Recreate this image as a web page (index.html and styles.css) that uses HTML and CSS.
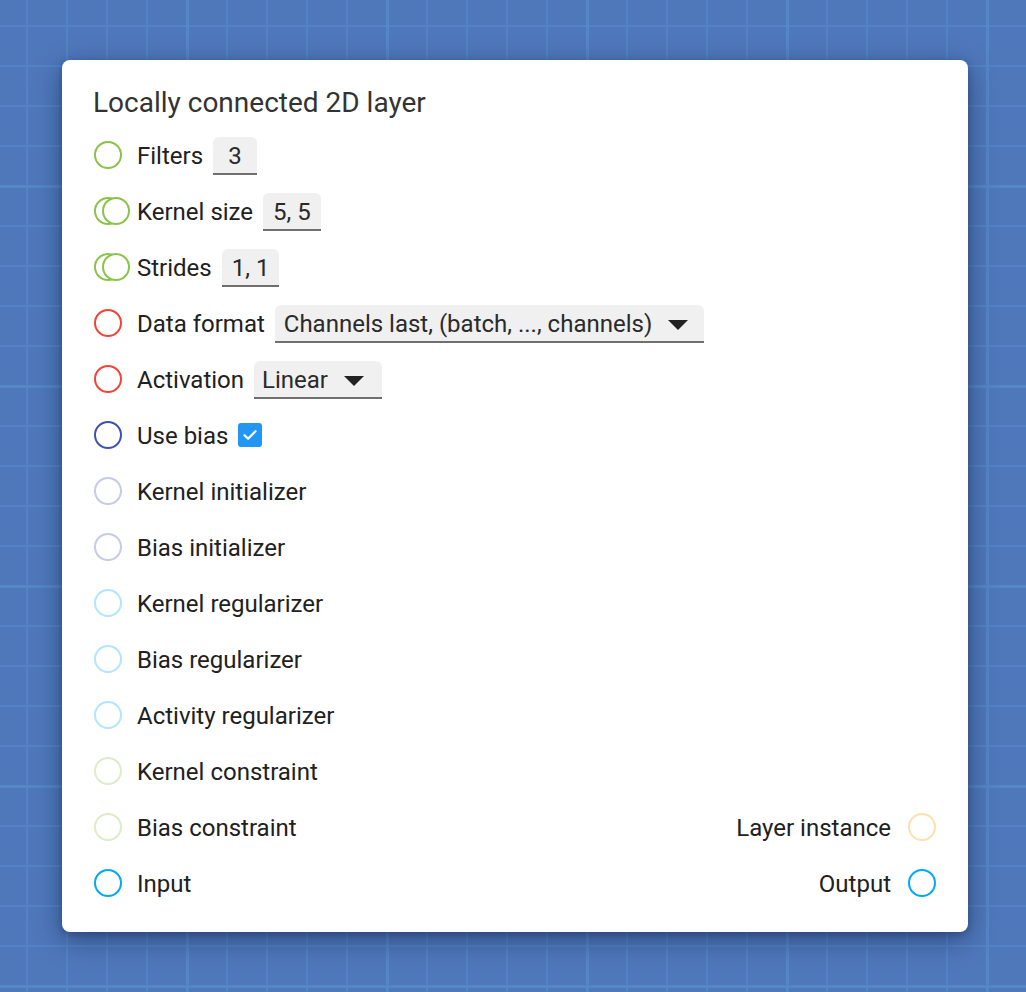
FILE: index.html
```html
<!DOCTYPE html>
<html>
<head>
<meta charset="utf-8">
<link rel="stylesheet" href="styles.css">
</head>
<body>
<div class="canvas">
  <div class="card">
    <div class="title">Locally connected 2D layer</div>
    <div class="rows">
      <div class="row">
        <div class="side">
          <svg class="sock" viewBox="0 0 36 28"><circle cx="14" cy="14" r="13" class="s-green"/></svg>
          <span class="label">Filters</span>
          <span class="field num">3</span>
        </div>
      </div>
      <div class="row">
        <div class="side">
          <svg class="sock" viewBox="0 0 36 28"><circle cx="14" cy="14" r="13" class="s-green"/><circle cx="22" cy="14" r="13" class="s-green"/></svg>
          <span class="label">Kernel size</span>
          <span class="field num">5, 5</span>
        </div>
      </div>
      <div class="row">
        <div class="side">
          <svg class="sock" viewBox="0 0 36 28"><circle cx="14" cy="14" r="13" class="s-green"/><circle cx="22" cy="14" r="13" class="s-green"/></svg>
          <span class="label">Strides</span>
          <span class="field num">1, 1</span>
        </div>
      </div>
      <div class="row">
        <div class="side">
          <svg class="sock" viewBox="0 0 36 28"><circle cx="14" cy="14" r="13" class="s-red"/></svg>
          <span class="label">Data format</span>
          <span class="field select select-wide">Channels last, (batch, ..., channels)<i class="caret"></i></span>
        </div>
      </div>
      <div class="row">
        <div class="side">
          <svg class="sock" viewBox="0 0 36 28"><circle cx="14" cy="14" r="13" class="s-red"/></svg>
          <span class="label">Activation</span>
          <span class="field select">Linear<i class="caret"></i></span>
        </div>
      </div>
      <div class="row">
        <div class="side">
          <svg class="sock" viewBox="0 0 36 28"><circle cx="14" cy="14" r="13" class="s-indigo"/></svg>
          <span class="label">Use bias</span>
          <span class="check"><svg viewBox="0 0 24 24"><path d="M6.5 12.2l3.6 3.6 7.4-7.6" fill="none" stroke="#fff" stroke-width="2.2" stroke-linecap="round" stroke-linejoin="round"/></svg></span>
        </div>
      </div>
      <div class="row">
        <div class="side">
          <svg class="sock" viewBox="0 0 36 28"><circle cx="14" cy="14" r="13" class="s-lav"/></svg>
          <span class="label">Kernel initializer</span>
        </div>
      </div>
      <div class="row">
        <div class="side">
          <svg class="sock" viewBox="0 0 36 28"><circle cx="14" cy="14" r="13" class="s-lav"/></svg>
          <span class="label">Bias initializer</span>
        </div>
      </div>
      <div class="row">
        <div class="side">
          <svg class="sock" viewBox="0 0 36 28"><circle cx="14" cy="14" r="13" class="s-sky"/></svg>
          <span class="label">Kernel regularizer</span>
        </div>
      </div>
      <div class="row">
        <div class="side">
          <svg class="sock" viewBox="0 0 36 28"><circle cx="14" cy="14" r="13" class="s-sky"/></svg>
          <span class="label">Bias regularizer</span>
        </div>
      </div>
      <div class="row">
        <div class="side">
          <svg class="sock" viewBox="0 0 36 28"><circle cx="14" cy="14" r="13" class="s-sky"/></svg>
          <span class="label">Activity regularizer</span>
        </div>
      </div>
      <div class="row">
        <div class="side">
          <svg class="sock" viewBox="0 0 36 28"><circle cx="14" cy="14" r="13" class="s-lime"/></svg>
          <span class="label">Kernel constraint</span>
        </div>
      </div>
      <div class="row">
        <div class="side">
          <svg class="sock" viewBox="0 0 36 28"><circle cx="14" cy="14" r="13" class="s-lime"/></svg>
          <span class="label">Bias constraint</span>
        </div>
        <div class="side right">
          <span class="label">Layer instance</span>
          <svg class="sock-r" viewBox="0 0 28 28"><circle cx="14" cy="14" r="13" class="s-peach"/></svg>
        </div>
      </div>
      <div class="row">
        <div class="side">
          <svg class="sock" viewBox="0 0 36 28"><circle cx="14" cy="14" r="13" class="s-blue"/></svg>
          <span class="label">Input</span>
        </div>
        <div class="side right">
          <span class="label">Output</span>
          <svg class="sock-r" viewBox="0 0 28 28"><circle cx="14" cy="14" r="13" class="s-blue"/></svg>
        </div>
      </div>
    </div>
  </div>
</div>
</body>
</html>
```
FILE: styles.css
```css
html, body {
  margin: 0;
  padding: 0;
}
body {
  width: 1026px;
  height: 992px;
  overflow: hidden;
  font-family: Roboto, "Liberation Sans", sans-serif;
  background-color: #4f78bb;
  background-image:
    linear-gradient(to right, #5586c6 0, #5586c6 3px, transparent 3px),
    linear-gradient(to bottom, #5586c6 0, #5586c6 3px, transparent 3px),
    linear-gradient(to right, #5383c4 0, #5383c4 2px, transparent 2px),
    linear-gradient(to bottom, #5383c4 0, #5383c4 2px, transparent 2px);
  background-size: 200px 200px, 200px 200px, 40px 40px, 40px 40px;
  background-position: 186px 0, 0 185px, 26px 0, 0 25px;
}
.canvas {
  padding: 60px 58px 60px 62px;
}
.card {
  width: 906px;
  height: 872px;
  box-sizing: border-box;
  background: #fff;
  border-radius: 8px;
  box-shadow: 0 8px 28px rgba(10, 25, 60, 0.45), 0 2px 6px rgba(10, 25, 60, 0.25);
  padding: 27px 32px 29px 32px;
  color: #212121;
}
.title {
  font-size: 28px;
  line-height: 32px;
  color: #333;
  margin-left: -1px;
}
.rows {
  margin-top: 16px;
  display: flex;
  flex-direction: column;
  gap: 16px;
}
.row {
  height: 40px;
  display: flex;
  align-items: center;
  justify-content: space-between;
}
.side {
  display: flex;
  align-items: center;
  height: 40px;
}
.sock {
  width: 36px;
  height: 28px;
  margin-right: 7px;
  flex: none;
}
.sock-r {
  width: 28px;
  height: 28px;
  margin-left: 17px;
  flex: none;
}
.sock circle, .sock-r circle {
  fill: #fff;
  stroke-width: 2;
}
.s-green { stroke: #8bc34a; }
.s-red { stroke: #f44336; }
.s-indigo { stroke: #3f51b5; }
.s-lav { stroke: #c5cae9; }
.s-sky { stroke: #b3e5fc; }
.s-lime { stroke: #dcedc8; }
.s-peach { stroke: #ffe0b2; }
.s-blue { stroke: #03a9f4; }
.label {
  font-size: 24px;
  line-height: 28px;
  color: #212121;
  white-space: nowrap;
  padding-top: 1px;
}
.field {
  margin-left: 10px;
  height: 38px;
  box-sizing: border-box;
  background: #f0f0f0;
  border-radius: 6px 6px 0 0;
  border-bottom: 2px solid #6f6f6f;
  font-size: 24px;
  line-height: 36px;
  color: #2a2a2a;
  display: inline-flex;
  align-items: center;
  white-space: nowrap;
  margin-top: 2px;
  padding-top: 1px;
}
.num {
  padding-left: 10px;
  padding-right: 10px;
  min-width: 44px;
  justify-content: center;
}
.select {
  padding-left: 8px;
  padding-right: 18px;
}
.select-wide {
  padding-left: 9px;
  padding-right: 16px;
}
.caret {
  display: inline-block;
  width: 0;
  height: 0;
  border-left: 10px solid transparent;
  border-right: 10px solid transparent;
  border-top: 10px solid #222;
  margin-left: 16px;
  margin-top: 2px;
}
.check {
  margin-left: 10px;
  width: 24px;
  height: 24px;
  border-radius: 3px;
  background: #2196f3;
  display: inline-flex;
}
.check svg {
  width: 24px;
  height: 24px;
}
.right .label {
  text-align: right;
}
```
